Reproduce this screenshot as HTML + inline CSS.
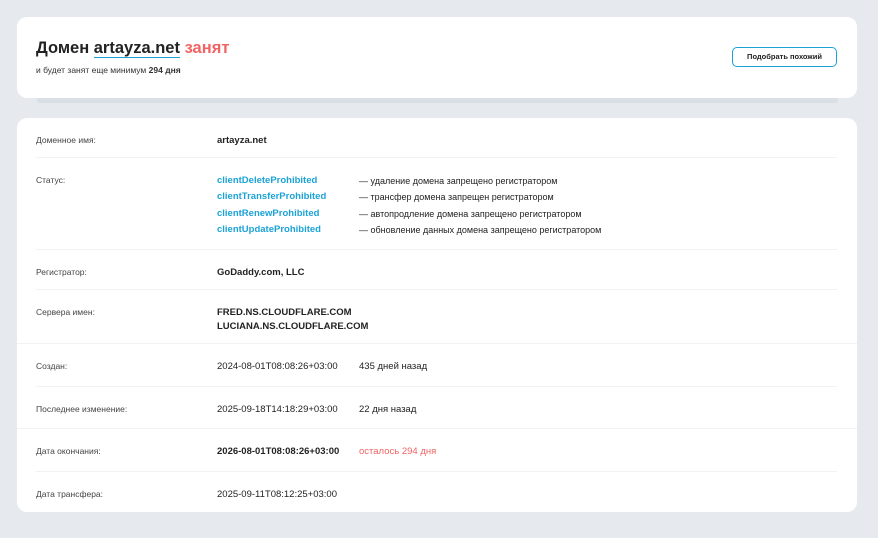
<!DOCTYPE html>
<html><head><meta charset="utf-8"><style>
*{margin:0;padding:0;box-sizing:border-box}
body{width:878px;height:538px;background:#e6eaee;font-family:"Liberation Sans","DejaVu Sans",sans-serif;color:#222;position:relative;overflow:hidden}
.a{position:absolute;white-space:nowrap}
.card{position:absolute;background:#fff;border-radius:10px}
.l{font-size:8.5px;color:#444;margin-top:2px}
.v{font-size:9.5px;color:#222;margin-top:3px}
.b{font-weight:bold}
.bl{color:#1ba3d6;font-weight:bold;font-size:9.5px;margin-top:3px}
.hr{position:absolute;height:1px;background:#f0f2f4}
</style></head><body>
<div class="a" style="left:37px;top:92px;width:801px;height:11px;background:#d9dfe5;border-radius:3px"></div>
<div class="card" style="left:17px;top:17px;width:840px;height:81px"></div>
<div class="a" style="left:36px;top:39px;font-size:16.5px;font-weight:bold;color:#222">Домен <span style="border-bottom:1px solid #1ba3d6">artayza.net</span> <span style="color:#f06464">занят</span></div>
<div class="a" style="left:36px;top:65px;font-size:8.5px;color:#333">и будет занят еще минимум <b>294 дня</b></div>
<div class="a" style="left:732px;top:47px;width:105px;height:20px;border:1px solid #1ba3d6;border-radius:5px;font-size:7.5px;font-weight:bold;text-align:center;line-height:18px;color:#222">Подобрать похожий</div>

<div class="card" style="left:17px;top:118px;width:840px;height:394px"></div>
<div class="a l" style="left:36px;top:133px">Доменное имя:</div>
<div class="a v b" style="left:217px;top:132px">artayza.net</div>
<div class="hr" style="left:36px;top:157px;width:801px"></div>

<div class="a l" style="left:36px;top:173px">Статус:</div>
<div class="a bl" style="left:217px;top:172px">clientDeleteProhibited</div>
<div class="a bl" style="left:217px;top:188px">clientTransferProhibited</div>
<div class="a bl" style="left:217px;top:205px">clientRenewProhibited</div>
<div class="a bl" style="left:217px;top:221px">clientUpdateProhibited</div>
<div class="a v" style="left:359px;top:173px;font-size:9px">— удаление домена запрещено регистратором</div>
<div class="a v" style="left:359px;top:189px;font-size:9px">— трансфер домена запрещен регистратором</div>
<div class="a v" style="left:359px;top:206px;font-size:9px">— автопродление домена запрещено регистратором</div>
<div class="a v" style="left:359px;top:222px;font-size:9px">— обновление данных домена запрещено регистратором</div>
<div class="hr" style="left:36px;top:249px;width:801px"></div>

<div class="a l" style="left:36px;top:265px">Регистратор:</div>
<div class="a v b" style="left:217px;top:264px">GoDaddy.com, LLC</div>
<div class="hr" style="left:36px;top:289px;width:801px"></div>

<div class="a l" style="left:36px;top:305px">Сервера имен:</div>
<div class="a v b" style="left:217px;top:304px">FRED.NS.CLOUDFLARE.COM</div>
<div class="a v b" style="left:217px;top:318px">LUCIANA.NS.CLOUDFLARE.COM</div>
<div class="hr" style="left:17px;top:343px;width:840px"></div>

<div class="a l" style="left:36px;top:359px">Создан:</div>
<div class="a v" style="left:217px;top:358px">2024-08-01T08:08:26+03:00</div>
<div class="a v" style="left:359px;top:358px">435 дней назад</div>
<div class="hr" style="left:36px;top:386px;width:801px"></div>

<div class="a l" style="left:36px;top:402px">Последнее изменение:</div>
<div class="a v" style="left:217px;top:401px">2025-09-18T14:18:29+03:00</div>
<div class="a v" style="left:359px;top:401px">22 дня назад</div>
<div class="hr" style="left:17px;top:428px;width:840px"></div>

<div class="a l" style="left:36px;top:444px">Дата окончания:</div>
<div class="a v b" style="left:217px;top:443px">2026-08-01T08:08:26+03:00</div>
<div class="a v" style="left:359px;top:443px;color:#f06464">осталось 294 дня</div>
<div class="hr" style="left:36px;top:471px;width:801px"></div>

<div class="a l" style="left:36px;top:487px">Дата трансфера:</div>
<div class="a v" style="left:217px;top:486px">2025-09-11T08:12:25+03:00</div>
</body></html>
